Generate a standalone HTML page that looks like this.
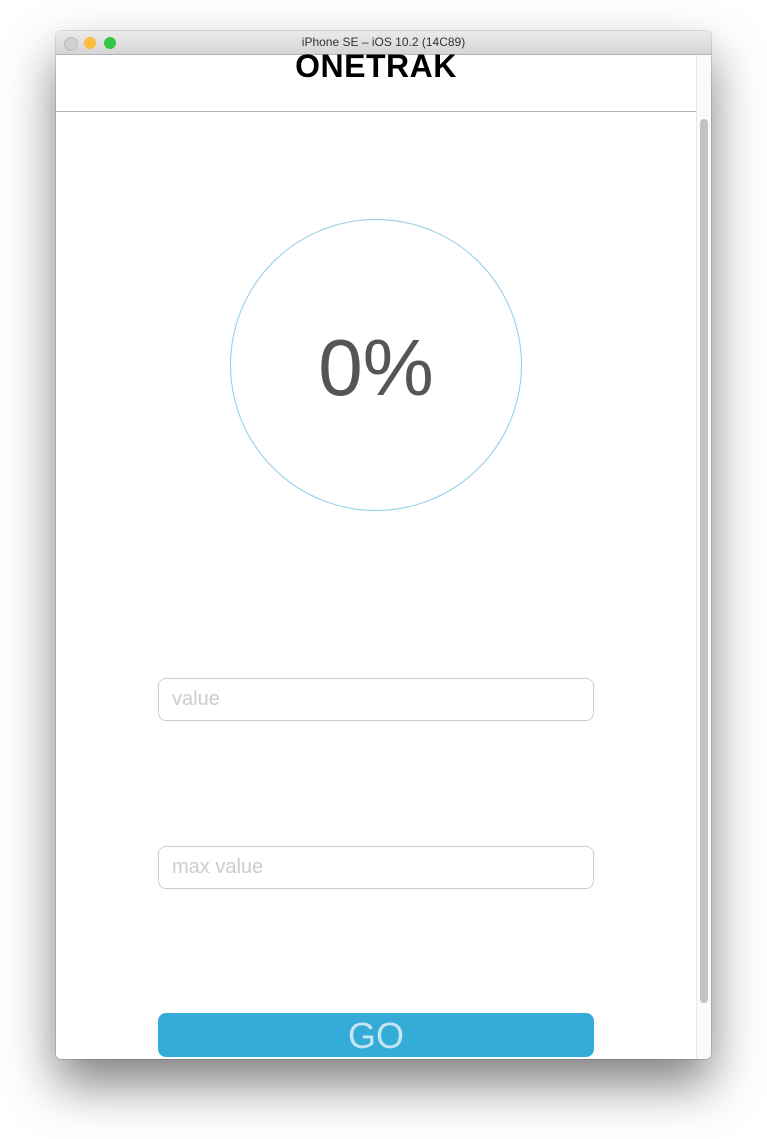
<!DOCTYPE html>
<html><head><style>
body{margin:0;width:767px;height:1139px;background:#fff;position:relative;overflow:hidden;font-family:"Liberation Sans",sans-serif}
.win{position:absolute;left:56px;top:31px;width:655px;height:1028px;background:#fff;border-radius:5px;box-shadow:0 25px 50px rgba(0,0,0,.5),0 0 0 1px rgba(0,0,0,.12);overflow:hidden}
.tb{position:absolute;left:0;top:0;width:655px;height:23px;background:linear-gradient(#ebebeb,#d5d5d5);border-bottom:1px solid #b5b5b5;text-align:center;font-size:12px;line-height:23px;color:#333}
.dot{position:absolute;top:6px;width:12px;height:12px;border-radius:50%}
.h{position:absolute;left:0;top:17px;width:640px;text-align:center;font-size:32px;font-weight:bold;letter-spacing:0.5px}
.line{position:absolute;left:0;top:80px;width:640px;height:1px;background:#b0b0b0}
.sb{position:absolute;left:640px;top:24px;width:15px;height:1004px;background:#fafafa;border-left:1px solid #e8e8e8}
.th{position:absolute;left:644px;top:88px;width:8px;height:884px;border-radius:4px;background:#c2c2c2}
.circ{position:absolute;left:174px;top:188px;width:290px;height:290px;border:1px solid #8fcbe6;border-radius:50%}
.pct{position:absolute;left:174px;top:287px;width:292px;text-align:center;font-size:80px;font-weight:100;color:#555;line-height:100px}
.in{position:absolute;left:102px;border:1px solid #cdcdcd;border-radius:8px;font-size:20px;color:#ccc;line-height:41px;padding-left:13px;box-sizing:border-box;width:436px;height:43px}
.go{position:absolute;left:102px;top:982px;width:436px;height:44px;background:#35acd8;border-radius:8px;color:#c4e6f3;text-align:center;font-size:36px;line-height:46px;font-weight:100}
</style></head><body>
<div class="win">
<div class="tb">iPhone SE – iOS 10.2 (14C89)
<div class="dot" style="left:8px;background:#d0d0d0;border:0.5px solid #bbb"></div>
<div class="dot" style="left:28px;background:#fdbc40"></div>
<div class="dot" style="left:48px;background:#33c748"></div></div>
<div class="h">ONETRAK</div>
<div class="line"></div>
<div class="sb"></div><div class="th"></div>
<div class="circ"></div>
<div class="pct">0%</div>
<div class="in" style="top:647px">value</div>
<div class="in" style="top:815px">max value</div>
<div class="go">GO</div>
</div>
</body></html>
